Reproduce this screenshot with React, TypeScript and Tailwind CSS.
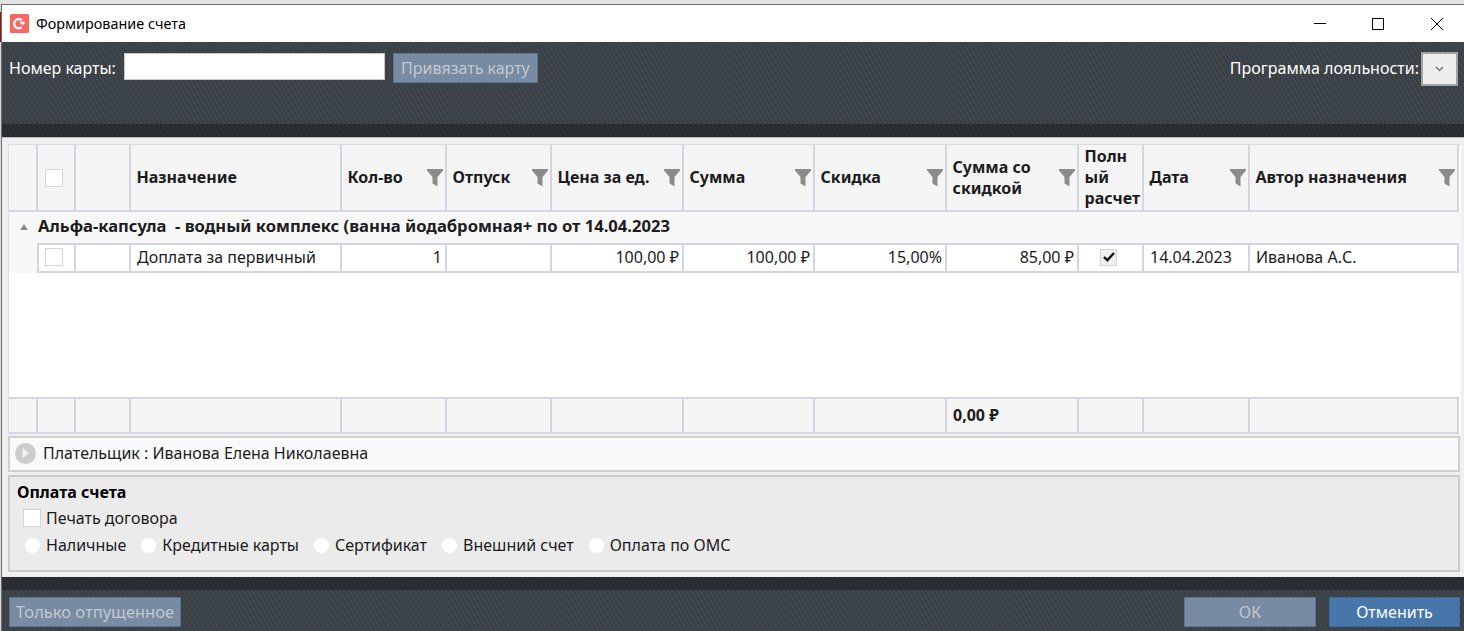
import React from 'react';

const stripes =
	'bg-[repeating-linear-gradient(60deg,#40474c_0px,#40474c_2px,#393f44_2px,#393f44_4px)]';
const darkStripes =
	'bg-[repeating-linear-gradient(60deg,#2c3135_0px,#2c3135_2px,#272b2f_2px,#272b2f_4px)]';

const gridCols =
	'grid grid-cols-[29px_38px_55px_211px_105px_105px_132px_131px_132px_132px_65px_106px_1fr]';

const columns = [
	{ title: '' },
	{ title: '', check: true },
	{ title: '' },
	{ title: 'Назначение' },
	{ title: 'Кол-во', filter: true },
	{ title: 'Отпуск', filter: true },
	{ title: 'Цена за ед.', filter: true },
	{ title: 'Сумма', filter: true },
	{ title: 'Скидка', filter: true },
	{ title: 'Сумма со скидкой', filter: true },
	{ title: 'Полн ый расчет' },
	{ title: 'Дата', filter: true },
	{ title: 'Автор назначения', filter: true },
];

function FilterIcon() {
	return (
		<svg width="16" height="18" viewBox="0 0 16 18" className="shrink-0">
			<path d="M0 0H16V1.5L10.5 8V17.5L5.5 14.5V8L0 1.5Z" fill="#8b8b8b" />
		</svg>
	);
}

function Logo() {
	return (
		<svg width="19" height="19" viewBox="0 0 19 19" className="shrink-0">
			<rect width="19" height="19" rx="1.5" fill="#fb6660" />
			<path d="M11.8 6.2A4.6 4.6 0 1 0 11.8 13.2" fill="none" stroke="#fff" strokeWidth="2.4" />
			<path d="M12.5 11.2L10.2 9C9.4 7.9 11.3 6.9 12.5 8C13.7 6.9 15.6 7.9 14.8 9Z" fill="#fff" />
		</svg>
	);
}

function CheckBox({ checked }: { checked?: boolean }) {
	return (
		<div
			className={`flex items-center justify-center border border-[#d5d5d5] ${checked ? 'w-[17px] h-[17px] bg-[#f0f0f0]' : 'w-[18px] h-[18px] bg-white'}`}
		>
			{checked && (
				<svg width="12" height="10" viewBox="0 0 12 10">
					<path d="M1 5L4.3 8.2L11 1" fill="none" stroke="#111" strokeWidth="2.4" />
				</svg>
			)}
		</div>
	);
}

function Radio({ label }: { label: string }) {
	return (
		<div className="flex items-center gap-[6px]">
			<div className="w-[15px] h-[15px] rounded-full bg-white" />
			<span>{label}</span>
		</div>
	);
}

function DarkButton({ label, className }: { label: string; className: string }) {
	return (
		<div
			className={`h-[30px] flex items-center justify-center border border-[#5d7592] bg-[#778ba3] text-[#c3c8ce] ${className}`}
		>
			{label}
		</div>
	);
}

export default function App() {
	const row = [
		{ v: '', check: true },
		{ v: '' },
		{ v: 'Доплата за первичный' },
		{ v: '1', right: true },
		{ v: '' },
		{ v: '100,00 ₽', right: true },
		{ v: '100,00 ₽', right: true },
		{ v: '15,00%', right: true },
		{ v: '85,00 ₽', right: true },
		{ v: '', tick: true },
		{ v: '14.04.2023' },
		{ v: 'Иванова А.С.' },
	];

	return (
		<div className="w-[1464px] h-[631px] overflow-hidden flex flex-col bg-[#e3e3e3] font-['Noto_Sans',sans-serif] text-[#1c1c1c] text-[16px]">
			<div className="h-[4px] bg-[#e3e3e3]" />
			<div className="flex-1 flex min-h-0">
				<div className="w-[1px] flex flex-col">
					<div className="h-[8px] bg-[#cfcfcf]" />
					<div className="h-[30px] bg-[#b00b0b]" />
					<div className="flex-1 bg-[#d8d8d8]" />
				</div>
				<div className="flex-1 flex flex-col border-t border-l border-[#6e6e6e] min-w-0">
					<div className="h-[37px] bg-white flex items-center pl-[8px] text-[14.4px] text-black">
						<Logo />
						<span className="ml-[7px]">Формирование счета</span>
						<div className="ml-auto flex items-center">
							<div className="w-[58px] flex justify-center">
								<svg width="12" height="12" viewBox="0 0 12 12">
									<path d="M0 5.5H12" stroke="#000" strokeWidth="1" />
								</svg>
							</div>
							<div className="w-[58px] flex justify-center">
								<svg width="12" height="12" viewBox="0 0 12 12">
									<rect x="0.5" y="0.5" width="11" height="11" fill="none" stroke="#000" />
								</svg>
							</div>
							<div className="ml-[3px] w-[54px] flex justify-center">
								<svg width="12" height="12" viewBox="0 0 12 12">
									<path d="M0 0L12 12M12 0L0 12" stroke="#000" strokeWidth="1" />
								</svg>
							</div>
						</div>
					</div>

					<div className={`h-[82px] flex items-start pt-[11px] pl-[7px] pr-[6px] text-white ${stripes}`}>
						<div className="h-[30px] flex items-center">Номер карты:</div>
						<div className="ml-[8px] w-[261px] h-[27px] bg-white border border-[#c8c8c8]" />
						<DarkButton label="Привязать карту" className="ml-[8px] w-[145px]" />
						<div className="ml-auto h-[30px] flex items-center">Программа лояльности:</div>
						<div className="ml-[2px] -mt-[1px] w-[37px] h-[34px] bg-[#eeeeee] border-2 border-[#a3a3a3] flex items-center justify-center">
							<svg width="9" height="6" viewBox="0 0 9 6">
								<path d="M1 1L4.5 4.5L8 1" fill="none" stroke="#777" strokeWidth="1.5" />
							</svg>
						</div>
					</div>
					<div className={`h-[13px] ${darkStripes}`} />

					<div className="h-[440px] bg-[#f0f0f0] flex flex-col pl-[6px] pr-[3px] pt-[6px] border-t border-[#bdbdbd]">
						<div className="h-[290px] flex flex-col bg-white border-t border-l border-[#dcdce4]">
							<div className={`${gridCols} mr-[2px] h-[67px] bg-[#f5f5f5] border-b-2 border-[#d5d5e2] font-bold leading-[21px] shrink-0`}>
								{columns.map((c, i) => (
									<div key={i} className={`flex items-center gap-[2px] pl-[5.5px] border-r-2 border-[#d5d5e2] min-w-0 ${c.filter ? 'pr-[2px]' : ''}`}>
										{c.check ? (
											<div className="ml-[1px]">
												<CheckBox />
											</div>
										) : (
											<span className="flex-1 min-w-0 break-words">{c.title}</span>
										)}
										{c.filter && <FilterIcon />}
									</div>
								))}
							</div>
							<div className="h-[31px] pb-[2px] bg-[#f7f7f7] flex items-center font-bold text-[16.6px] shrink-0">
								<div className="w-[29px] flex justify-center pl-[1px]">
									<svg width="8" height="6" viewBox="0 0 8 6">
										<path d="M4 0L8 6H0Z" fill="#8a8a8a" />
									</svg>
								</div>
								<span className="whitespace-pre">Альфа-капсула  - водный комплекс (ванна йодабромная+ по от 14.04.2023</span>
							</div>
							<div className="flex shrink-0 bg-[#f7f7f7]">
								<div className="w-[28px]" />
								<div className="flex-1 mr-[2px] bg-white border-t-2 border-b-2 border-l-2 border-[#d5d5e2] h-[30px] grid grid-cols-[37px_55px_211px_105px_105px_132px_131px_132px_132px_65px_106px_1fr]">
									{row.map((c, i) => (
										<div
											key={i}
											className={`flex items-center border-r-2 border-[#d5d5e2] pb-[2px] whitespace-nowrap ${c.right ? 'justify-end pr-[3px]' : 'pl-[6px]'}`}
										>
											{c.check && <CheckBox />}
											{c.tick && (
												<div className="ml-[15px]">
													<CheckBox checked />
												</div>
											)}
											{c.v}
										</div>
									))}
								</div>
							</div>
							<div className="flex-1" />
							<div className={`${gridCols} h-[37px] mr-[2px] bg-[#f5f5f5] border-t-2 border-b-2 border-[#d5d5e2] font-bold shrink-0`}>
								{columns.map((c, i) => (
									<div key={i} className="flex items-center pl-[6px] pb-[2px] border-r-2 border-[#d5d5e2]">
										{i === 9 ? '0,00 ₽' : ''}
									</div>
								))}
							</div>
						</div>

						<div className="mt-[2px] mr-[1px] h-[36px] pb-[2px] bg-[#fafafa] border-2 border-[#d0d0d0] flex items-center pl-[5px]">
							<div className="w-[21px] h-[21px] rounded-full bg-[#cccccc] flex items-center justify-center">
								<svg width="7" height="10" viewBox="0 0 7 10">
									<path d="M0.5 0L7 5L0.5 10Z" fill="#f2f2f2" />
								</svg>
							</div>
							<span className="ml-[7px]">Плательщик : Иванова Елена Николаевна</span>
						</div>

						<div className="mt-[3px] mr-[1px] h-[97px] bg-[#ebebeb] border-2 border-[#cacaca] pl-[7px] pt-[4px] flex flex-col">
							<div className="font-bold text-black leading-[22px]">Оплата счета</div>
							<div className="mt-[4px] ml-[6px] flex items-center gap-[5px] leading-[22px]">
								<CheckBox />
								<span>Печать договора</span>
							</div>
							<div className="mt-[5px] ml-[8px] flex items-center gap-[15px] leading-[22px]">
								<Radio label="Наличные" />
								<Radio label="Кредитные карты" />
								<Radio label="Сертификат" />
								<Radio label="Внешний счет" />
								<Radio label="Оплата по ОМС" />
							</div>
						</div>
					</div>

					<div className={`h-[13px] ${darkStripes}`} />
					<div className={`flex-1 flex items-start pl-[7px] pr-[4px] pt-[7px] ${stripes}`}>
						<DarkButton label="Только отпущенное" className="w-[172px] text-[16.5px]" />
						<DarkButton label="OK" className="ml-auto w-[132px]" />
						<div className="ml-[13px] w-[131px] h-[30px] flex items-center justify-center bg-[#4776ab] border border-[#3d6a9e] text-white">
							Отменить
						</div>
					</div>
				</div>
			</div>
		</div>
	);
}
